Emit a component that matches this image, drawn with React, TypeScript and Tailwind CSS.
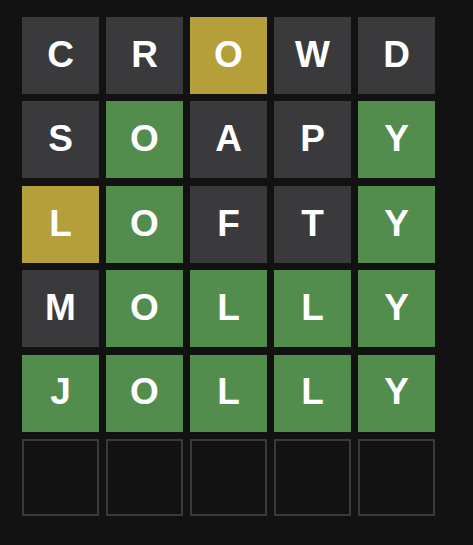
import React from 'react'

type Tile = { l: string; s: 'absent' | 'present' | 'correct' | 'empty' }

const A = 'absent'
const P = 'present'
const C = 'correct'

const rows: Tile[][] = [
  [['C', A], ['R', A], ['O', P], ['W', A], ['D', A]],
  [['S', A], ['O', C], ['A', A], ['P', A], ['Y', C]],
  [['L', P], ['O', C], ['F', A], ['T', A], ['Y', C]],
  [['M', A], ['O', C], ['L', C], ['L', C], ['Y', C]],
  [['J', C], ['O', C], ['L', C], ['L', C], ['Y', C]],
].map((r) => r.map(([l, s]) => ({ l, s } as Tile)))

rows.push(Array.from({ length: 5 }, () => ({ l: '', s: 'empty' as const })))

const tileClass = {
  absent: 'bg-[#3a3a3c]',
  present: 'bg-[#b59f3b]',
  correct: 'bg-[#538d4e]',
  empty: 'border-2 border-[#3a3a3c]',
}

export default function App() {
  return (
    <div className="min-h-screen bg-[#121213] pl-[22px] pt-[17px]">
      {/* Board */}
      <div className="grid grid-cols-[repeat(5,77px)] auto-rows-[77px] gap-x-[7px] gap-y-[7.4px]">
        {rows.flat().map((t, i) => (
          <div
            key={i}
            className={`flex items-center justify-center pb-[2px] text-[37px] font-bold text-white uppercase ${tileClass[t.s]}`}
            style={{ fontFamily: '"Liberation Sans", Arial, sans-serif' }}
          >
            {t.l}
          </div>
        ))}
      </div>
    </div>
  )
}
